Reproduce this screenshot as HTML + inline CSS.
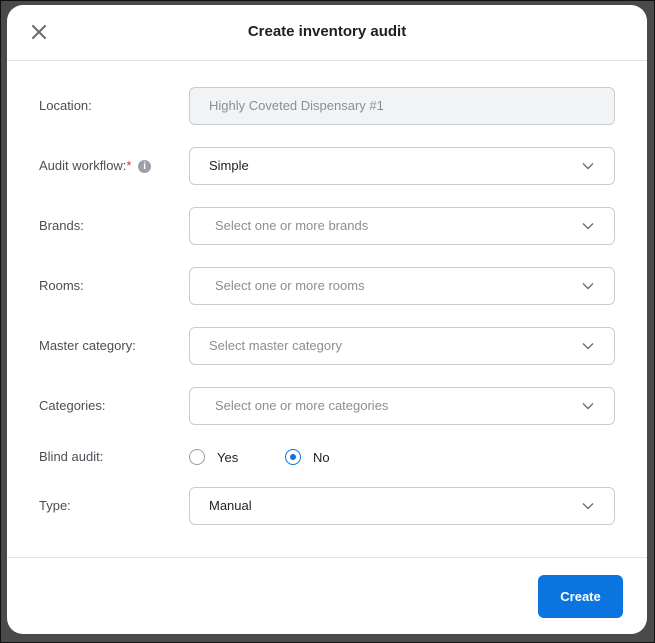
<!DOCTYPE html>
<html><head><style>
*{box-sizing:border-box;margin:0;padding:0}
body{width:655px;height:643px;background:#4a4a4a;font-family:"Liberation Sans",sans-serif;position:relative;overflow:hidden;box-shadow:inset 0 0 0 1px #111}
.modal{position:absolute;left:7px;top:5px;width:640px;height:629px;background:#fff;border-radius:16px;overflow:hidden}
.hdr{height:56px;border-bottom:1px solid #e2e4e8;position:relative}
.hdr h1{font-size:15px;font-weight:bold;color:#1d1f22;text-align:center;line-height:54px}
.x{position:absolute;left:24px;top:19px}
.lab{position:absolute;left:32px;font-size:13px;color:#4a4f55}
.inp{position:absolute;left:182px;width:426px;height:38px;border:1px solid #c9ccd1;border-radius:6px;font-size:13px;color:#1d1f22;line-height:36px;padding-left:19px}
.inp.ph{color:#8a8f96;padding-left:25px}
.inp.dis{background:#f2f3f4;color:#8a8f96}
.chev{position:absolute;right:20px;top:14px}
.foot{position:absolute;left:0;top:552px;width:100%;border-top:1px solid #e2e4e8}
.btn{position:absolute;left:531px;top:570px;width:85px;height:43px;background:#0b74de;color:#fff;border-radius:6px;font-weight:bold;font-size:13px;text-align:center;line-height:43px}
.radio{position:absolute;width:16px;height:16px;border-radius:50%;border:1px solid #9aa0a6}
.radio.on{border:1.5px solid #0b74de}
.radio.on::after{content:"";position:absolute;left:3.5px;top:3.5px;width:6px;height:6px;border-radius:50%;background:#0b74de}
</style></head><body>
<div class="modal">
<div class="hdr"><svg class="x" width="16" height="16" viewBox="0 0 16 16"><path d="M2 2L14 14M14 2L2 14" stroke="#6b7078" stroke-width="2.2" stroke-linecap="round"/></svg><h1>Create inventory audit</h1></div>
<div class="lab" style="top:93px">Location:</div>
<div class="inp dis" style="top:82px">Highly Coveted Dispensary #1</div>
<div class="lab" style="top:153px">Audit workflow:<span style="color:#d32f2f">*</span> <span style="display:inline-block;width:13px;height:13px;border-radius:50%;background:#9aa0a6;color:#fff;font-size:10px;font-weight:bold;text-align:center;line-height:13px;vertical-align:1px;margin-left:3px">i</span></div>
<div class="inp" style="top:142px">Simple<svg class="chev" width="12" height="8" viewBox="0 0 12 8"><path d="M1 1.5L6 6.5L11 1.5" stroke="#6b7078" stroke-width="1.4" fill="none"/></svg></div>
<div class="lab" style="top:213px">Brands:</div>
<div class="inp ph" style="top:202px">Select one or more brands<svg class="chev" width="12" height="8" viewBox="0 0 12 8"><path d="M1 1.5L6 6.5L11 1.5" stroke="#6b7078" stroke-width="1.4" fill="none"/></svg></div>
<div class="lab" style="top:273px">Rooms:</div>
<div class="inp ph" style="top:262px">Select one or more rooms<svg class="chev" width="12" height="8" viewBox="0 0 12 8"><path d="M1 1.5L6 6.5L11 1.5" stroke="#6b7078" stroke-width="1.4" fill="none"/></svg></div>
<div class="lab" style="top:333px">Master category:</div>
<div class="inp ph" style="top:322px;padding-left:19px">Select master category<svg class="chev" width="12" height="8" viewBox="0 0 12 8"><path d="M1 1.5L6 6.5L11 1.5" stroke="#6b7078" stroke-width="1.4" fill="none"/></svg></div>
<div class="lab" style="top:393px">Categories:</div>
<div class="inp ph" style="top:382px">Select one or more categories<svg class="chev" width="12" height="8" viewBox="0 0 12 8"><path d="M1 1.5L6 6.5L11 1.5" stroke="#6b7078" stroke-width="1.4" fill="none"/></svg></div>
<div class="lab" style="top:444px">Blind audit:</div>
<div class="radio" style="left:182px;top:444px"></div>
<div class="lab" style="left:210px;top:445px;color:#1d1f22">Yes</div>
<div class="radio on" style="left:278px;top:444px"></div>
<div class="lab" style="left:306px;top:445px;color:#1d1f22">No</div>
<div class="lab" style="top:493px">Type:</div>
<div class="inp" style="top:482px">Manual<svg class="chev" width="12" height="8" viewBox="0 0 12 8"><path d="M1 1.5L6 6.5L11 1.5" stroke="#6b7078" stroke-width="1.4" fill="none"/></svg></div>
<div class="foot"></div>
<div class="btn">Create</div>
</div>
</body></html>
